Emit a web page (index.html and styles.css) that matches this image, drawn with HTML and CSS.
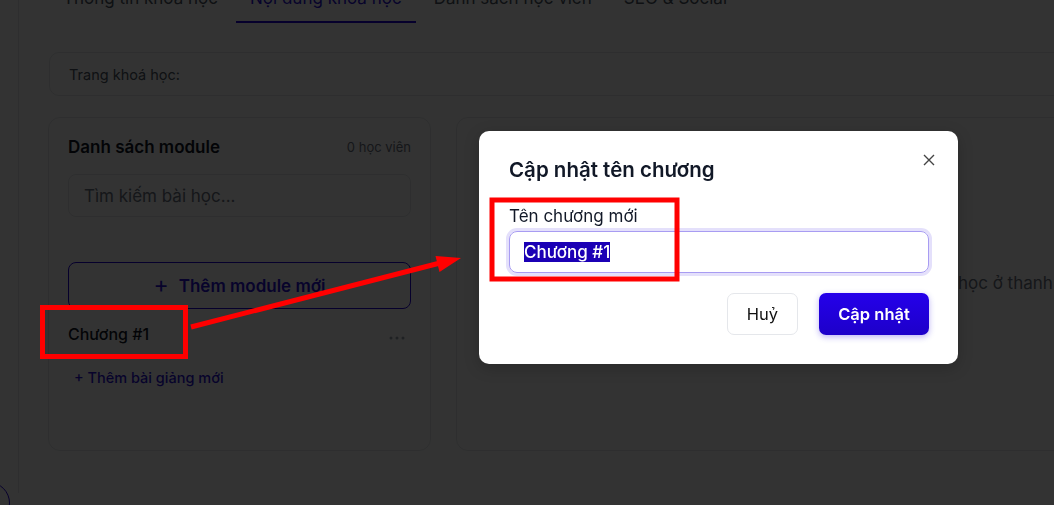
FILE: index.html
```html
<!DOCTYPE html>
<html lang="vi">
  <head>
    <meta charset="UTF-8" />
    <meta name="viewport" content="width=device-width, initial-scale=1.0" />
    <title>Nội dung khoá học</title>
    <link rel="stylesheet" href="styles.css">
  </head>
  <body>
    <div class="page">
      <div class="main">
        <nav class="tabs">
          <a class="tab">Thông tin khoá học</a>
          <a class="tab active">Nội dung khoá học</a>
          <a class="tab">Danh sách học viên</a>
          <a class="tab">SEO &amp; Social</a>
        </nav>

        <div class="course-url">Trang khoá học:</div>

        <div class="content">
          <!-- Module list -->
          <div class="card modules">
            <div class="modules-head">
              <h3>Danh sách module</h3>
              <span class="count">0 học viên</span>
            </div>
            <div class="search">Tìm kiếm bài học...</div>
            <button class="add-module"><span class="plus">+</span>Thêm module mới</button>
            <div class="chapter">
              <span>Chương #1</span>
              <svg class="dots" width="16" height="4" viewBox="0 0 16 4">
                <circle cx="2" cy="2" r="1.5" />
                <circle cx="8" cy="2" r="1.5" />
                <circle cx="14" cy="2" r="1.5" />
              </svg>
            </div>
            <a class="add-lesson">+ Thêm bài giảng mới</a>
          </div>

          <!-- Lesson preview -->
          <div class="card preview">
            <p class="empty">Chọn một bài học ở thanh bên trái để chỉnh sửa</p>
          </div>
        </div>
      </div>
      <div class="fab"></div>
    </div>

    <div class="overlay"></div>

    <div class="modal">
      <div class="modal-head">
        <h2>Cập nhật tên chương</h2>
        <svg class="close" width="12" height="12" viewBox="0 0 12 12">
          <path d="M1 1 L11 11 M11 1 L1 11" />
        </svg>
      </div>
      <label class="field-label">Tên chương mới</label>
      <div class="field"><span class="selected">Chương #1</span></div>
      <div class="actions">
        <button class="btn btn-cancel">Huỷ</button>
        <button class="btn btn-primary">Cập nhật</button>
      </div>
    </div>

    <!-- red markup on top -->
    <svg class="markup" width="1054" height="505" viewBox="0 0 1054 505">
      <rect x="42.5" y="307.5" width="143" height="49" />
      <rect x="492" y="200" width="185" height="79" />
      <line x1="191" y1="327" x2="440" y2="263" />
      <polygon points="461,258 435.5,256 439.5,272" />
    </svg>
  </body>
</html>
```

FILE: styles.css
```css
/* General Styles */
body {
  margin: 0;
  font-family: Inter, "Noto Sans", sans-serif;
  color: #111827;
  background: #fff;
  overflow: hidden;
  height: 505px;
}

.page {
  position: relative;
  height: 505px;
}

.main {
  margin-left: 18px;
  border-left: 1px solid #e5e7eb;
  padding-left: 30px;
  width: 1250px;
  height: 100%;
}

/* Tabs */
.tabs {
  display: flex;
  gap: 4px;
  margin-top: -12px;
}

.tab {
  font-size: 17px;
  line-height: 20px;
  color: #4b5563;
  padding: 0 14px 13px;
  border-bottom: 2px solid transparent;
}

.tab.active {
  color: #2a12d8;
  border-bottom-color: #2200dd;
}

.course-url {
  margin-top: 29px;
  height: 44px;
  box-sizing: border-box;
  border: 1px solid #e5e7eb;
  border-radius: 10px;
  padding: 0 19px;
  display: flex;
  align-items: center;
  font-size: 14.5px;
  color: #4b5563;
}

/* Cards */
.content {
  display: flex;
  gap: 25px;
  margin-top: 21px;
  margin-left: -1px;
}

.card {
  border: 1px solid #e5e7eb;
  border-radius: 12px;
  height: 334px;
  box-sizing: border-box;
}

.modules {
  width: 383px;
  padding: 18px 19px 0;
}

.modules-head {
  display: flex;
  justify-content: space-between;
  align-items: center;
  height: 22px;
}

.modules-head h3 {
  margin: 0;
  font-size: 17px;
  font-weight: 600;
}

.count {
  font-size: 13px;
  color: #6b7280;
}

.search {
  margin-top: 16px;
  height: 43px;
  box-sizing: border-box;
  border: 1px solid #e5e7eb;
  border-radius: 8px;
  padding: 0 15px;
  display: flex;
  align-items: center;
  font-size: 17px;
  color: #6b7280;
}

.add-module {
  margin-top: 45px;
  width: 100%;
  height: 47px;
  border: 1px solid #2200dd;
  border-radius: 8px;
  background: #fff;
  color: #2a12d8;
  font-family: inherit;
  font-size: 17px;
  font-weight: 600;
  display: flex;
  align-items: center;
  justify-content: center;
}

.add-module .plus {
  font-size: 23px;
  font-weight: 400;
  margin-right: 10px;
  line-height: 1;
}

.chapter {
  display: flex;
  justify-content: space-between;
  align-items: center;
  margin-top: 14px;
  height: 22px;
  font-size: 16px;
  font-weight: 500;
}

.dots {
  fill: #9ca3af;
  margin-right: 6px;
  margin-top: 7px;
}

.add-lesson {
  display: block;
  margin-top: 24px;
  margin-left: 6px;
  font-size: 14.5px;
  font-weight: 500;
  color: #2a12d8;
}

.preview {
  flex: 1;
  display: flex;
  align-items: center;
  padding-left: 389px;
}

.empty {
  margin: 0 0 2px;
  font-size: 17px;
  color: #6b7280;
  white-space: nowrap;
}

.fab {
  position: absolute;
  left: -32px;
  top: 494px;
  width: 40px;
  height: 40px;
  border: 1px solid #2200dd;
  border-radius: 50%;
}

/* Dialog */
.overlay {
  position: fixed;
  inset: 0;
  background: rgba(0, 0, 0, 0.8);
}

.modal {
  position: absolute;
  left: 479px;
  top: 131px;
  width: 479px;
  height: 233px;
  box-sizing: border-box;
  padding: 24px 29px 30px 30px;
  background: #fff;
  border-radius: 10px;
  box-shadow: 0 4px 16px rgba(0, 0, 0, 0.2);
}

.modal-head {
  display: flex;
  justify-content: space-between;
  align-items: flex-start;
}

.modal-head h2 {
  margin: 0;
  font-size: 20.5px;
  font-weight: 600;
  line-height: 30px;
}

.close {
  stroke: #444;
  stroke-width: 1.4;
  margin-top: -1px;
  margin-right: -6px;
}

.field-label {
  display: block;
  margin-top: 21px;
  font-size: 17px;
  line-height: 20px;
}

.field {
  margin-top: 5px;
  height: 42px;
  box-sizing: border-box;
  border: 1px solid #a89cf2;
  border-radius: 8px;
  box-shadow: 0 0 0 3px #e4e0fb;
  padding: 0 14px;
  display: flex;
  align-items: center;
  font-size: 17px;
  font-weight: 500;
}

.selected {
  background: #1b00b5;
  color: #fff;
  line-height: 20px;
}

.actions {
  display: flex;
  justify-content: flex-end;
  gap: 21px;
  margin-top: 20px;
}

.btn {
  height: 42px;
  border-radius: 7px;
  font-family: inherit;
  font-size: 16.5px;
}

.btn-cancel {
  width: 71px;
  background: #fff;
  border: 1px solid #e5e7eb;
  color: #111;
}

.btn-primary {
  width: 110px;
  border: none;
  color: #fff;
  font-weight: 600;
  background: linear-gradient(#2500ea, #1d00c9);
  box-shadow: 0 2px 6px rgba(34, 0, 221, 0.3);
}

/* Red markup */
.markup {
  position: absolute;
  left: 0;
  top: 0;
  pointer-events: none;
}

.markup rect {
  fill: none;
  stroke: #ff0000;
  stroke-width: 5;
}

.markup line {
  stroke: #ff0000;
  stroke-width: 5;
}

.markup polygon {
  fill: #ff0000;
}
```
